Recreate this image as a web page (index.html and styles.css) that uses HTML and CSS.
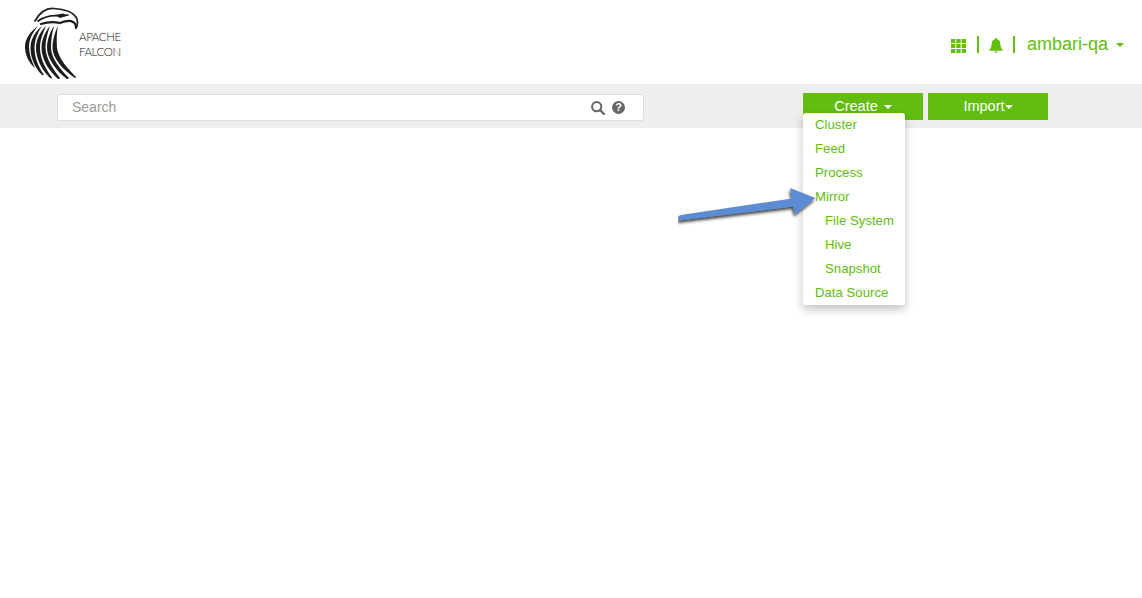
FILE: index.html
```html
<!DOCTYPE html>
<html lang="en">
<head>
<meta charset="utf-8">
<title>Apache Falcon</title>
<link rel="stylesheet" href="styles.css">
</head>
<body>
<header class="topbar">
  <a class="brand">
    <svg class="brand-mark" viewBox="24 6 56 74" width="56" height="74" aria-hidden="true">
      <g fill="none" stroke="#1c1c1c" stroke-linecap="round">
        <path stroke-width="1.700" d="M35 21C40 12 47 8 54 8.500C62 9 72 11 76 17C78 20 78 25 76 28"/>
        <path stroke-width="1.700" d="M38 21C45 16 54 15 62 16L68 15"/>
        <path stroke-width="2.200" d="M41 24C50 21 56 22 60 23C65 21 70 20 73 22C75 23 76 25 76 28"/>
      </g>
      <path fill="#1c1c1c" d="M55 15L63 13.500L68 15.500L60 18Z"/>
      <path fill="#1c1c1c" d="M38 26C31 31 25 38 25 47C25 55 29 63 35 68C31 60 29 53 29 47C29 39 33 32 38 26Z"/>
      <path fill="#1c1c1c" d="M42 26C35 32 30.500 39 30.500 48C30.500 58 35 68 42 75C43 75.500 44 75 44 75C38 66 34.500 57 34.500 48C34.500 40 38 32 42 26Z"/>
      <path fill="#1c1c1c" d="M46 26C40 32 36 40 36 48C36 59 42 70 50 78C51 78.500 52 78 52 77.500C45 68 40 58 40 48C40 40 43 33 46 26Z"/>
      <path fill="#1c1c1c" d="M50 26C45 32 41.500 40 41.500 48C41.500 59 49 71 58 79C59 79 60 78.500 60 78C52 68 46 58 45.500 48C45.500 40 47.500 33 50 26Z"/>
      <path fill="#1c1c1c" d="M54 26C50 32 47 40 47 48C47 58 56 71 67 79C68 79 68.500 78.500 69 78C59 68 51.500 58 51 48C51 40 52 33 54 26Z"/>
      <path fill="#1c1c1c" d="M58 26C55 32 52.500 40 52.500 48C52.500 58 63 70 75 78C75.500 78 76 77.500 76 77C67 68 58.500 58 57 48C56.500 40 56.500 33 58 26Z"/>
    </svg>
    <span class="brand-name">APACHE<br>FALCON</span>
  </a>
  <nav class="user-nav">
    <svg class="grid-icon" viewBox="0 0 15 14" width="15" height="14" aria-hidden="true">
      <path fill="#62bd10" d="M0 0h4.300v4H0zM5.350 0h4.300v4h-4.300zM10.700 0h4.300v4h-4.300zM0 5h4.300v4H0zM5.350 5h4.300v4h-4.300zM10.700 5h4.300v4h-4.300zM0 10h4.300v4H0zM5.350 10h4.300v4h-4.300zM10.700 10h4.300v4h-4.300z"/>
    </svg>
    <span class="divider divider-first"></span>
    <svg class="bell-icon" viewBox="0 0 14 15" width="14" height="15" aria-hidden="true">
      <path fill="#62bd10" d="M7 0C6.200 0 5.800.6 5.800 1.300C3.800 1.900 2.700 3.500 2.700 5.800C2.700 8.800 1.700 10.600 .3 11.900C0 12.200.2 12.700.6 12.700H13.400C13.800 12.700 14 12.200 13.700 11.900C12.300 10.600 11.300 8.800 11.300 5.800C11.300 3.500 10.200 1.900 8.200 1.300C8.200.6 7.800 0 7 0ZM5.600 13.400C5.700 14.300 6.300 15 7 15C7.700 15 8.300 14.300 8.400 13.400Z"/>
    </svg>
    <span class="divider"></span>
    <span class="user-name">ambari-qa</span>
    <span class="caret caret-user"></span>
  </nav>
</header>
<section class="toolbar">
  <div class="search-box">
    <span class="search-text">Search</span>
    <svg class="search-icon" viewBox="0 0 14 14" width="14" height="14" aria-hidden="true">
      <circle cx="5.700" cy="5.700" r="4.600" fill="none" stroke="#666" stroke-width="2"/>
      <path d="M9 9l4 4" stroke="#666" stroke-width="2.400" stroke-linecap="round"/>
    </svg>
    <span class="help-icon">?</span>
  </div>
  <div class="actions">
    <div class="action-wrap">
      <button class="action-btn">Create <span class="caret caret-create"></span></button>
      <ul class="menu">
        <li class="menu-item">Cluster</li>
        <li class="menu-item">Feed</li>
        <li class="menu-item">Process</li>
        <li class="menu-item">Mirror</li>
        <li class="menu-item menu-sub">File System</li>
        <li class="menu-item menu-sub">Hive</li>
        <li class="menu-item menu-sub">Snapshot</li>
        <li class="menu-item">Data Source</li>
      </ul>
    </div>
    <button class="action-btn">Import<span class="caret"></span></button>
  </div>
</section>
<svg class="callout" viewBox="0 0 150 50" width="150" height="50" aria-hidden="true">
  <defs>
    <filter id="arrow-shadow" x="-10%" y="-20%" width="120%" height="150%">
      <feDropShadow dx="-1" dy="2.500" stdDeviation="1.400" flood-color="#000" flood-opacity=".75"/>
    </filter>
  </defs>
  <path filter="url(#arrow-shadow)" fill="#5b8cd3" d="M3 29C1 29.500 0 30.500 .2 32C.5 33.500 1.500 34.500 3 34.300L115 20.500L117 28L137.500 12L112 2L114 12.500Z"/>
</svg>
</body>
</html>
```

FILE: styles.css
```css
* { box-sizing: border-box; }
html, body { margin: 0; height: 100%; overflow: hidden; }
body {
  background: #fff;
  font-family: "Liberation Sans", Arial, sans-serif;
  color: #62bd10;
  position: relative;
}
.topbar {
  height: 84px;
  display: flex;
  align-items: center;
  justify-content: space-between;
  padding: 0 18px 0 24px;
}
.brand { display: flex; align-items: center; }
.brand-mark { display: block; margin-top: 2px; }
.brand-name {
  font-family: Lato, sans-serif;
  font-weight: 300;
  font-size: 11.500px;
  letter-spacing: -.4px;
  line-height: 14.500px;
  color: #111;
  margin: 5px 0 0 -1px;
}
.user-nav { display: flex; align-items: center; margin-top: 5px; }
.grid-icon { display: block; margin-top: 2px; }
.bell-icon { display: block; margin: 1px 0 0; }
.divider {
  width: 2px;
  height: 17px;
  background: #62bd10;
  margin: 0 10px;
}
.divider-first { margin-left: 11px; }
.user-name { font-size: 18px; margin-left: 2px; line-height: 24px; margin-right: 8px; margin-top: -1px; }
.caret {
  display: inline-block;
  width: 0;
  height: 0;
  border-left: 4px solid transparent;
  border-right: 4px solid transparent;
  border-top: 4px solid #fff;
  vertical-align: middle;
}
.caret-user { border-top-color: #62bd10; }
.caret-create { margin-left: 2px; }
.toolbar {
  height: 44px;
  background: #eee;
  display: flex;
  padding: 9px 0 0 57px;
}
.search-box {
  width: 587px;
  height: 27px;
  margin-top: 1px;
  background: #fff;
  border: 1px solid #ddd;
  border-radius: 2px;
  display: flex;
  align-items: center;
  padding: 0 18px 0 14px;
  font-size: 14px;
  color: #999;
}
.search-text { flex: 1; margin-top: -2px; }
.search-icon { display: block; margin-right: 7px; }
.help-icon {
  width: 13px;
  height: 13px;
  border-radius: 50%;
  background: #666;
  color: #fff;
  font-size: 11px;
  font-weight: bold;
  line-height: 13px;
  text-align: center;
}
.actions { display: flex; gap: 5px; margin-left: 159px; }
.action-wrap { position: relative; }
.action-btn {
  display: block;
  width: 120px;
  height: 27px;
  border: 0;
  padding: 0;
  background: #62bd10;
  color: #fff;
  font-family: inherit;
  font-size: 14.500px;
  line-height: 25px;
}
.menu {
  position: absolute;
  top: 20px;
  left: 0;
  width: 102px;
  height: 192px;
  margin: 0;
  padding: 0;
  list-style: none;
  background: #fff;
  border-radius: 3px;
  box-shadow: 0 4px 10px rgba(0, 0, 0, .25);
}
.menu-item {
  height: 24px;
  line-height: 23px;
  padding-left: 12px;
  font-size: 13.200px;
  white-space: nowrap;
}
.menu-sub { padding-left: 22px; }
.callout {
  position: absolute;
  left: 678px;
  top: 186px;
}
```
